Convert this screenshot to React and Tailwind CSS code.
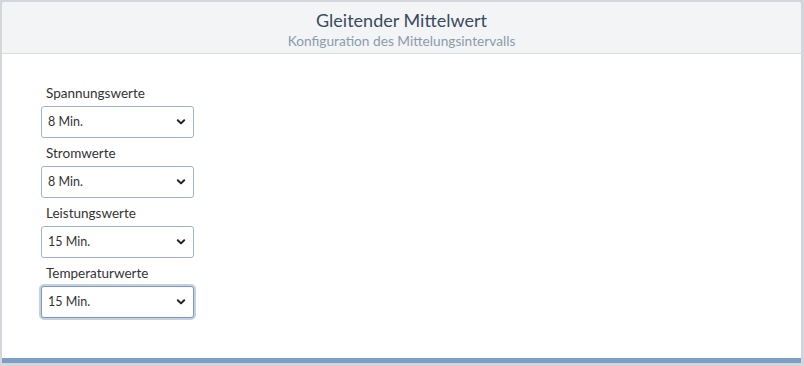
import React from "react";

function Chevron() {
  return (
    <svg width="10" height="10" viewBox="0 0 10 10" className="absolute right-[7px] top-1/2 -translate-y-1/2 pointer-events-none">
      <path d="M1.8 3.3 L5 6.4 L8.2 3.3" fill="none" stroke="#222" strokeWidth="2" strokeLinecap="round" strokeLinejoin="round" />
    </svg>
  );
}

function Field({ label, value, focused }) {
  return (
    <div className="flex flex-col">
      <div className="text-[13.5px] text-[#333] leading-[17px] pl-[5px] h-[21px]">{label}</div>
      <div
        className={
          "relative w-[153px] h-[32px] rounded-[3px] bg-white flex items-center pl-[6px] text-[12.5px] text-[#333] " +
          (focused
            ? "border border-[#7c98bd] shadow-[0_0_0_2px_rgba(124,152,189,0.45)]"
            : "border border-[#9fb4cf]")
        }
      >
        {value}
        <Chevron />
      </div>
    </div>
  );
}

export default function App() {
  return (
    <div
      className="w-[804px] h-[366px] bg-[#d3d6da] pl-[2px] pr-[3px] pt-[2px] pb-[3px]"
      style={{ fontFamily: "Lato, 'Liberation Sans', sans-serif" }}
    >
      <div className="w-full h-full bg-white rounded-t-[3px] border-b-[5px] border-[#7d9fc4] flex flex-col">
        <div className="h-[52px] bg-[#f3f4f6] border-b border-[#d9dcdf] flex flex-col items-center rounded-t-[3px]">
          <div className="text-[18px] leading-[22px] text-[#3a4a5e] mt-[7px]">Gleitender Mittelwert</div>
          <div className="text-[13.7px] leading-[16px] text-[#8b9bac] mt-[2px]">Konfiguration des Mittelungsintervalls</div>
        </div>
        <div className="pl-[39px] pt-[31px] flex flex-col gap-[7px]">
          <Field label="Spannungswerte" value="8 Min." />
          <Field label="Stromwerte" value="8 Min." />
          <Field label="Leistungswerte" value="15 Min." />
          <Field label="Temperaturwerte" value="15 Min." focused />
        </div>
      </div>
    </div>
  );
}
